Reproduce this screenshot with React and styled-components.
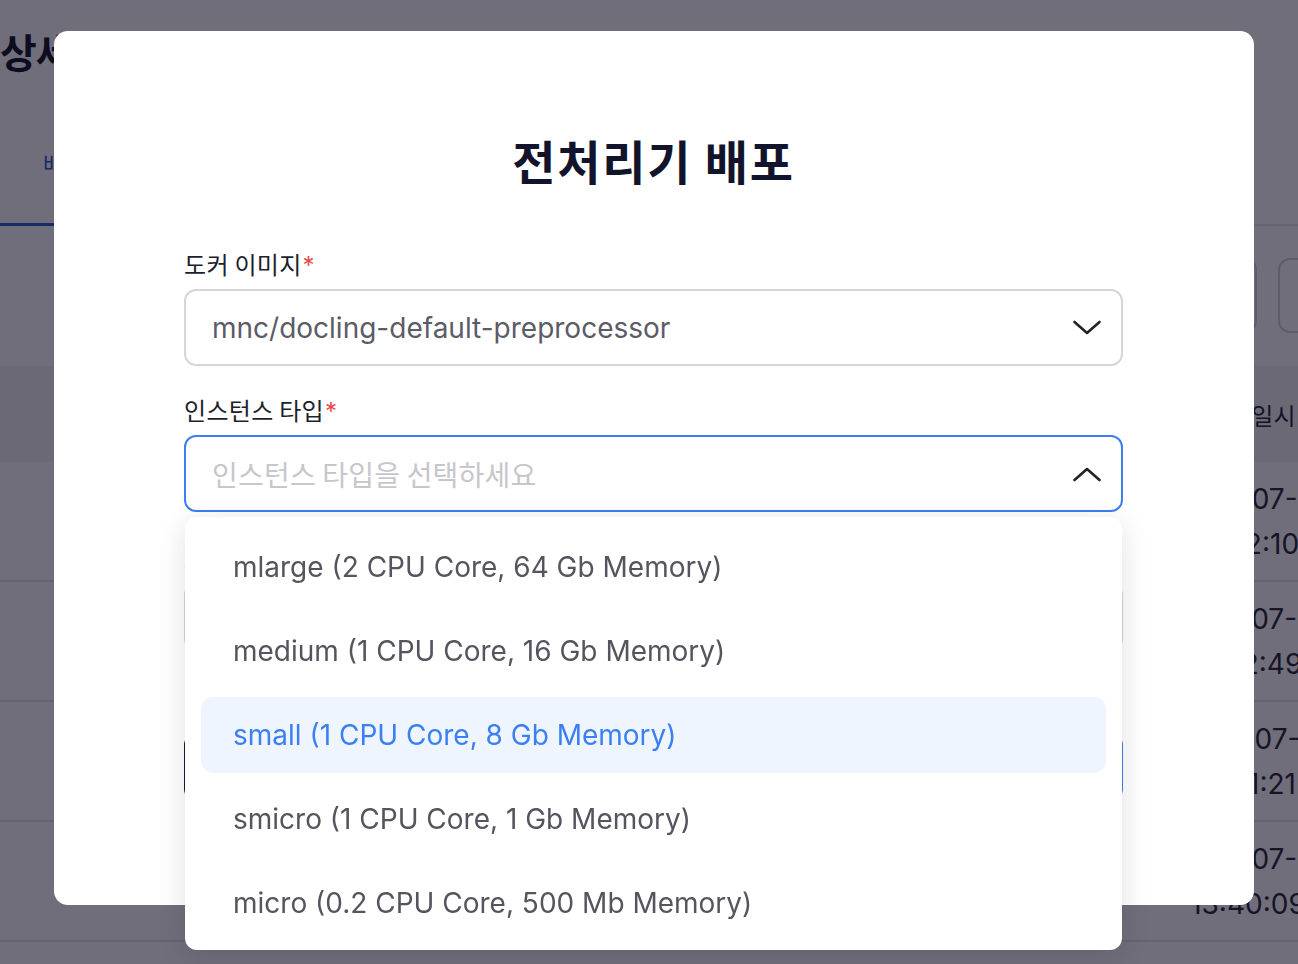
import React from "react";
import styled, { createGlobalStyle } from "styled-components";

const GlobalStyle = createGlobalStyle`
  html, body { margin: 0; padding: 0; overflow: hidden; }
  body {
    font-family: Inter, "Noto Sans CJK KR", "Noto Sans", sans-serif;
    background: #ffffff;
  }
  * { box-sizing: border-box; }
`;

const FONT = `Inter, "Noto Sans CJK KR", sans-serif`;

/* ---------- background page ---------- */
const Page = styled.div`
  width: 1298px;
  height: 964px;
  overflow: hidden;
  background: #ffffff;
  font-family: ${FONT};
  color: #1c1a2b;
`;

const PageTitle = styled.h1`
  margin: 0;
  padding: 22px 0 0 0;
  height: 100px;
  font-size: 40px;
  font-weight: 700;
  letter-spacing: -1px;
  color: #111827;
`;

const Tabs = styled.div`
  display: flex;
  height: 126px;
  border-bottom: 2px solid #e5e7eb;
  align-items: stretch;
`;

const Tab = styled.div`
  width: 180px;
  padding-left: 43px;
  display: flex;
  align-items: center;
  font-size: 22px;
  color: #2f5fd0;
  border-bottom: 3px solid #2f5fd0;
  margin-bottom: -2px;
`;

const Toolbar = styled.div`
  display: flex;
  justify-content: flex-end;
  gap: 21px;
  padding: 32px 0 0 0;
  height: 140px;
  margin-right: -100px;
`;

const ToolButton = styled.div`
  width: 120px;
  height: 75px;
  border: 2px solid #d1d5db;
  border-radius: 12px;
  background: #ffffff;
`;

const Table = styled.div`
  display: flex;
  flex-direction: column;
`;

const HeadRow = styled.div`
  display: grid;
  grid-template-columns: 1168px 160px;
  height: 96px;
  background: #f3f4f6;
  align-items: center;
  font-size: 24px;
  color: #1f2937;
  white-space: nowrap;
`;

const BodyRow = styled.div`
  display: grid;
  grid-template-columns: 1168px 160px;
  height: 120px;
  align-items: center;
  border-bottom: 2px solid #e5e7eb;
  font-size: 28px;
  color: #2b2a38;
  &:first-of-type { margin-top: 2px; }
`;

const Cell = styled.div`
  padding-left: ${(p) => p.$pad || 0}px;
  text-align: ${(p) => (p.$center ? "center" : "left")};
  white-space: nowrap;
`;

const DateCell = styled.div`
  display: flex;
  flex-direction: column;
  align-items: center;
  gap: 11px;
  white-space: nowrap;
  line-height: 34px;
`;

/* ---------- overlay & modal ---------- */
const Overlay = styled.div`
  position: fixed;
  inset: 0;
  background: rgba(10, 5, 28, 0.58);
`;

const Modal = styled.div`
  position: fixed;
  left: 54px;
  top: 31px;
  width: 1200px;
  height: 874px;
  background: #ffffff;
  border-radius: 14px;
  padding: 101px 131px 0 130px;
  display: flex;
  flex-direction: column;
  font-family: ${FONT};
`;

const ModalTitle = styled.h2`
  margin: 0 0 61px 0;
  text-align: center;
  font-family: "Noto Sans CJK KR", sans-serif;
  font-size: 47px;
  line-height: 56px;
  font-weight: 700;
  letter-spacing: 1.8px;
  color: #12142b;
`;

const Field = styled.div`
  display: flex;
  flex-direction: column;
  margin-bottom: ${(p) => p.$mb ?? 29}px;
  position: relative;
`;

const Label = styled.label`
  font-family: "Noto Sans CJK KR", sans-serif;
  font-size: 24px;
  line-height: 30px;
  letter-spacing: 0.3px;
  color: #1d1f2c;
  margin-bottom: 8px;
`;

const Required = styled.span`
  font-family: Inter, sans-serif;
  font-size: 24px;
  color: #e5484d;
  margin-left: 1px;
`;

const SelectBox = styled.div`
  height: 77px;
  border: 2px solid ${(p) => (p.$open ? "#3d7ef0" : "#d6d6d9")};
  border-radius: 12px;
  display: flex;
  align-items: center;
  justify-content: space-between;
  padding: 0 20px 0 26px;
  background: #ffffff;
`;

const SelectValue = styled.span`
  font-family: Inter, "Noto Sans CJK KR", sans-serif;
  font-size: 28px;
  color: #5c5b68;
`;

const Placeholder = styled.span`
  font-family: "Noto Sans CJK KR", sans-serif;
  font-size: 28px;
  letter-spacing: 0.2px;
  color: #c6c6cb;
`;

const Chevron = ({ up }) => (
  <svg width="28" height="16" viewBox="0 0 28 16" fill="none">
    <polyline
      points={up ? "1.5,14 14,3 26.5,14" : "1.5,2 14,13 26.5,2"}
      stroke="#222228"
      strokeWidth="2.6"
      strokeLinecap="round"
      strokeLinejoin="round"
    />
  </svg>
);

const Menu = styled.ul`
  position: absolute;
  top: calc(100% + 5px);
  left: 1px;
  right: 1px;
  margin: 0;
  padding: 12px 16px 9px;
  list-style: none;
  background: #ffffff;
  border-radius: 12px;
  box-shadow: 0 6px 28px rgba(20, 20, 40, 0.13);
  display: flex;
  flex-direction: column;
  gap: 8px;
  z-index: 5;
`;

const MenuItem = styled.li`
  height: 76px;
  display: flex;
  align-items: center;
  padding-left: 32px;
  border-radius: 12px;
  font-family: Inter, sans-serif;
  font-size: 28px;
  color: ${(p) => (p.$active ? "#3b7ff2" : "#55545f")};
  background: ${(p) => (p.$active ? "#eff5fe" : "transparent")};
`;

const PlainInput = styled.div`
  height: 68px;
  border: 2px solid #d6d6d9;
  border-radius: 12px;
`;

const Actions = styled.div`
  display: grid;
  grid-template-columns: 1fr 1fr;
  gap: 16px;
  margin-top: 82px;
`;

const ActionButton = styled.div`
  height: 68px;
  border-radius: 12px;
  display: flex;
  align-items: center;
  justify-content: center;
  font-family: "Noto Sans CJK KR", sans-serif;
  font-size: 24px;
  font-weight: 600;
  border: 2px solid ${(p) => (p.$primary ? "#3d7ef0" : "#0f1b3d")};
  background: ${(p) => (p.$primary ? "#3d7ef0" : "#ffffff")};
  color: ${(p) => (p.$primary ? "#ffffff" : "#0f1b3d")};
`;

const options = [
  "mlarge (2 CPU Core, 64 Gb Memory)",
  "medium (1 CPU Core, 16 Gb Memory)",
  "small (1 CPU Core, 8 Gb Memory)",
  "smicro (1 CPU Core, 1 Gb Memory)",
  "micro (0.2 CPU Core, 500 Mb Memory)",
];

const rows = [
  ["2025-07-15", "12:12:10"],
  ["2025-07-14", "12:12:49"],
  ["2025-07-11", "12:11:21"],
  ["2025-07-10", "13:40:09"],
];

export default function App() {
  return (
    <>
      <GlobalStyle />
      <Page>
        <PageTitle>상세 정보</PageTitle>
        <Tabs>
          <Tab>배포 이력</Tab>
        </Tabs>
        <Toolbar>
          <ToolButton />
          <ToolButton />
        </Toolbar>
        <Table>
          <HeadRow>
            <Cell $pad={120}>이름</Cell>
            <Cell $center>배포 일시</Cell>
          </HeadRow>
          {rows.map((r) => (
            <BodyRow key={r[0]}>
              <Cell $pad={120}>preprocessor</Cell>
              <DateCell>
                <span>{r[0]}</span>
                <span>{r[1]}</span>
              </DateCell>
            </BodyRow>
          ))}
        </Table>
      </Page>
      <Overlay />
      <Modal>
        <ModalTitle>전처리기 배포</ModalTitle>
        <Field>
          <Label>
            도커 이미지<Required>*</Required>
          </Label>
          <SelectBox>
            <SelectValue>mnc/docling-default-preprocessor</SelectValue>
            <Chevron />
          </SelectBox>
        </Field>
        <Field $mb={31}>
          <Label>
            인스턴스 타입<Required>*</Required>
          </Label>
          <SelectBox $open>
            <Placeholder>인스턴스 타입을 선택하세요</Placeholder>
            <Chevron up />
          </SelectBox>
          <Menu>
            {options.map((o) => (
              <MenuItem key={o} $active={o.startsWith("small")}>
                {o}
              </MenuItem>
            ))}
          </Menu>
        </Field>
        <Field $mb={0}>
          <Label>
            포트 번호<Required>*</Required>
          </Label>
          <PlainInput />
        </Field>
        <Actions>
          <ActionButton>취소</ActionButton>
          <ActionButton $primary>배포</ActionButton>
        </Actions>
      </Modal>
    </>
  );
}
